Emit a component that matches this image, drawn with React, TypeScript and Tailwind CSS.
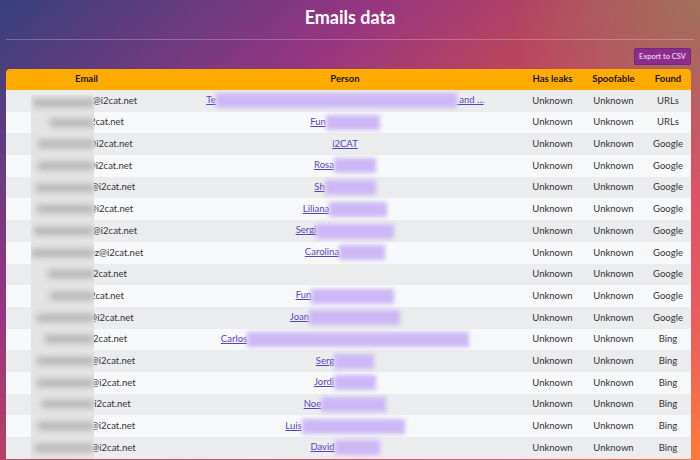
const rows = [
  { shown: "@i2cat.net", pad: "w-[57px]", smear: "w-[61px]", pre: "Te", blur: "w-[241px]", post: " and ...", found: "URLs" },
  { shown: "2cat.net", pad: "w-[41px]", smear: "w-[44px]", pre: "Fun", blur: "w-[54px]", post: "", found: "URLs" },
  { shown: "@i2cat.net", pad: "w-[48px]", smear: "w-[56px]", pre: "i2CAT", blur: "", post: "", found: "Google" },
  { shown: "@i2cat.net", pad: "w-[47px]", smear: "w-[56px]", pre: "Rosa", blur: "w-[42px]", post: "", found: "Google" },
  { shown: "@i2cat.net", pad: "w-[53px]", smear: "w-[58px]", pre: "Sh", blur: "w-[51px]", post: "", found: "Google" },
  { shown: "@i2cat.net", pad: "w-[49px]", smear: "w-[57px]", pre: "Liliana", blur: "w-[58px]", post: "", found: "Google" },
  { shown: "@i2cat.net", pad: "w-[57px]", smear: "w-[60px]", pre: "Sergi", blur: "w-[78px]", post: "", found: "Google" },
  { shown: "ez@i2cat.net", pad: "w-[60px]", smear: "w-[63px]", pre: "Carolina", blur: "w-[46px]", post: "", found: "Google" },
  { shown: "2cat.net", pad: "w-[47px]", smear: "w-[46px]", pre: "", blur: "", post: "", found: "Google" },
  { shown: "2cat.net", pad: "w-[41px]", smear: "w-[44px]", pre: "Fun", blur: "w-[83px]", post: "", found: "Google" },
  { shown: "@i2cat.net", pad: "w-[50px]", smear: "w-[57px]", pre: "Joan", blur: "w-[91px]", post: "", found: "Google" },
  { shown: "i2cat.net", pad: "w-[45px]", smear: "w-[49px]", pre: "Carlos", blur: "w-[222px]", post: "", found: "Bing" },
  { shown: "@i2cat.net", pad: "w-[53px]", smear: "w-[57px]", pre: "Serg", blur: "w-[40px]", post: "", found: "Bing" },
  { shown: "@i2cat.net", pad: "w-[54px]", smear: "w-[57px]", pre: "Jordi", blur: "w-[42px]", post: "", found: "Bing" },
  { shown: "@i2cat.net", pad: "w-[44px]", smear: "w-[52px]", pre: "Noe", blur: "w-[65px]", post: "", found: "Bing" },
  { shown: "@i2cat.net", pad: "w-[53px]", smear: "w-[56px]", pre: "Luis", blur: "w-[103px]", post: "", found: "Bing" },
  { shown: "@i2cat.net", pad: "w-[54px]", smear: "w-[59px]", pre: "David", blur: "w-[45px]", post: "", found: "Bing" },
];

export default function App() {
  return (
    <div className="h-[460px] w-[700px] overflow-hidden bg-[radial-gradient(circle_at_100%_0%,#a0705a_0px,transparent_190px),linear-gradient(140deg,#37407c_0%,#6e3a80_18%,#963581_30%,#b8445f_46%,#d8506a_70%,#e85a60_85%,#ff7a35_100%)] font-['Lato',sans-serif]">
      <h1 className="pt-[5px] text-center text-[18px] leading-[24px] font-bold text-white">Emails data</h1>
      <div className="mx-[6px] mt-[10px] h-px bg-white/25" />
      <div className="mt-[8px] flex justify-end pr-[9px]">
        <button className="h-[17px] w-[57px] rounded-[2px] border border-[#6f2a80] bg-[#8e2c8c] text-[7.5px] leading-none text-white/90">
          Export to CSV
        </button>
      </div>
      <div className="relative mt-[4px] ml-[6px] w-[685px]">
        <table className="w-full table-fixed border-collapse text-center text-[9.5px] text-[#333]">
          <colgroup>
            <col className="w-[161px]" />
            <col className="w-[356px]" />
            <col className="w-[59px]" />
            <col className="w-[63px]" />
            <col className="w-[46px]" />
          </colgroup>
          <thead>
            <tr className="h-[21px] bg-[#ffab00] text-[#1c1400]">
              <th className="rounded-tl-[4px] font-bold">Email</th>
              <th className="font-bold">Person</th>
              <th className="font-bold">Has leaks</th>
              <th className="font-bold">Spoofable</th>
              <th className="rounded-tr-[4px] font-bold">Found</th>
            </tr>
          </thead>
          <tbody>
            {rows.map((r, i) => (
              <tr key={i} className={i % 2 === 0 ? "h-[21.7px] bg-[#ebecee]" : "h-[21.7px] bg-[#f7f8fa]"}>
                <td className="whitespace-nowrap">
                  <span className={`inline-block ${r.pad}`} />
                  {r.shown}
                </td>
                <td className="whitespace-nowrap">
                  <a className="text-[#5b3fc4] underline">
                    {r.pre}
                    {r.blur && <span className={`inline-block h-[15px] align-middle bg-[#cdb8f5] blur-[2px] ${r.blur}`} />}
                    {r.post}
                  </a>
                </td>
                <td>Unknown</td>
                <td>Unknown</td>
                <td>{r.found}</td>
              </tr>
            ))}
          </tbody>
        </table>
        {/* redaction panel lying over the email column */}
        <div className="absolute top-[26px] bottom-0 left-[25px] flex w-[63px] flex-col overflow-hidden bg-[#e4e4e5]">
          {rows.map((r, i) => (
            <div key={i} className={i === 0 ? "flex h-[16.7px] shrink-0 items-center justify-end" : "flex h-[21.7px] shrink-0 items-center justify-end"}>
              <div className={`h-[8px] bg-[#b4b4b6] blur-[3px] ${r.smear}`} />
            </div>
          ))}
        </div>
      </div>
    </div>
  );
}
